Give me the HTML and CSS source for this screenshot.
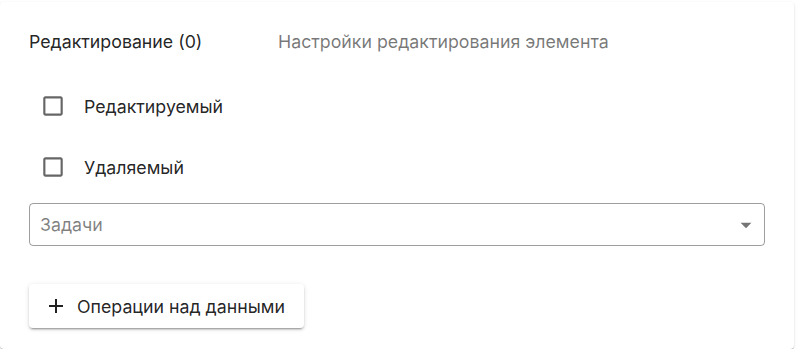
FILE: index.html
```html
<!DOCTYPE html>
<html lang="ru">
<head>
<meta charset="utf-8">
<link rel="stylesheet" href="styles.css">
</head>
<body>
<div class="card">
  <div class="header">
    <span class="title">Редактирование (0)</span>
    <span class="subtitle">Настройки редактирования элемента</span>
  </div>
  <label class="check-row first">
    <span class="check-icon">
      <svg viewBox="0 0 24 24" width="26" height="26"><path d="M19 5v14H5V5h14m0-2H5c-1.11 0-2 .9-2 2v14c0 1.1.89 2 2 2h14c1.1 0 2-.9 2-2V5c0-1.1-.9-2-2-2z"/></svg>
    </span>
    <span class="check-label">Редактируемый</span>
  </label>
  <label class="check-row second">
    <span class="check-icon">
      <svg viewBox="0 0 24 24" width="26" height="26"><path d="M19 5v14H5V5h14m0-2H5c-1.11 0-2 .9-2 2v14c0 1.1.89 2 2 2h14c1.1 0 2-.9 2-2V5c0-1.1-.9-2-2-2z"/></svg>
    </span>
    <span class="check-label">Удаляемый</span>
  </label>
  <div class="select">
    <span class="placeholder">Задачи</span>
    <svg class="arrow" viewBox="0 0 24 24" width="26" height="26"><path d="M7 10l5 5 5-5z"/></svg>
  </div>
  <button class="op-button" type="button">
    <svg class="plus" viewBox="0 0 24 24" width="24" height="24"><path d="M19 13h-6v6h-2v-6H5v-2h6V5h2v6h6v2z"/></svg>
    <span>Операции над данными</span>
  </button>
</div>
</body>
</html>
```
FILE: styles.css
```css
html, body {
  margin: 0;
  padding: 0;
  background: #ffffff;
}
body {
  font-family: Inter, "Noto Sans", "Liberation Sans", sans-serif;
  color: rgba(0, 0, 0, 0.87);
}
.card {
  box-sizing: border-box;
  width: 794px;
  height: 347px;
  margin-top: 2px;
  background: #fff;
  border-radius: 4px;
  box-shadow: 0 2px 1px -1px rgba(0,0,0,0.2), 0 1px 1px 0 rgba(0,0,0,0.14), 0 1px 3px 0 rgba(0,0,0,0.12);
  padding: 28px 29px 0 29px;
  display: flex;
  flex-direction: column;
  align-items: flex-start;
}
.header {
  display: flex;
  align-items: center;
  height: 24px;
  font-size: 17.75px;
  line-height: 24px;
}
.title {
  color: rgba(0, 0, 0, 0.87);
  width: 249px;
}
.subtitle {
  color: rgba(0, 0, 0, 0.54);
}
.check-row {
  display: flex;
  align-items: center;
  height: 42px;
  padding-left: 11px;
  font-size: 17.75px;
}
.check-row.first { margin-top: 31px; }
.check-row.second { margin-top: 19px; }
.check-icon {
  display: flex;
  width: 26px;
  height: 26px;
  fill: rgba(0, 0, 0, 0.6);
}
.check-label {
  margin-left: 18px;
  color: rgba(0, 0, 0, 0.87);
}
.select {
  box-sizing: border-box;
  margin-top: 15px;
  width: 736px;
  height: 43px;
  border: 1px solid rgba(0, 0, 0, 0.38);
  border-radius: 4px;
  display: flex;
  align-items: center;
  padding-left: 10px;
  padding-right: 5px;
}
.placeholder {
  flex: 1;
  font-size: 17.75px;
  color: rgba(0, 0, 0, 0.5);
}
.arrow {
  fill: rgba(0, 0, 0, 0.54);
}
.op-button {
  margin-top: 38px;
  height: 44px;
  display: flex;
  align-items: center;
  gap: 9px;
  padding: 0 19px 0 15px;
  border: none;
  border-radius: 4px;
  background: #fff;
  font-family: inherit;
  font-size: 17.75px;
  color: rgba(0, 0, 0, 0.87);
  box-shadow: 0 3px 1px -2px rgba(0,0,0,0.2), 0 2px 2px 0 rgba(0,0,0,0.14), 0 1px 5px 0 rgba(0,0,0,0.12);
}
.plus {
  fill: rgba(0, 0, 0, 0.87);
}
```
